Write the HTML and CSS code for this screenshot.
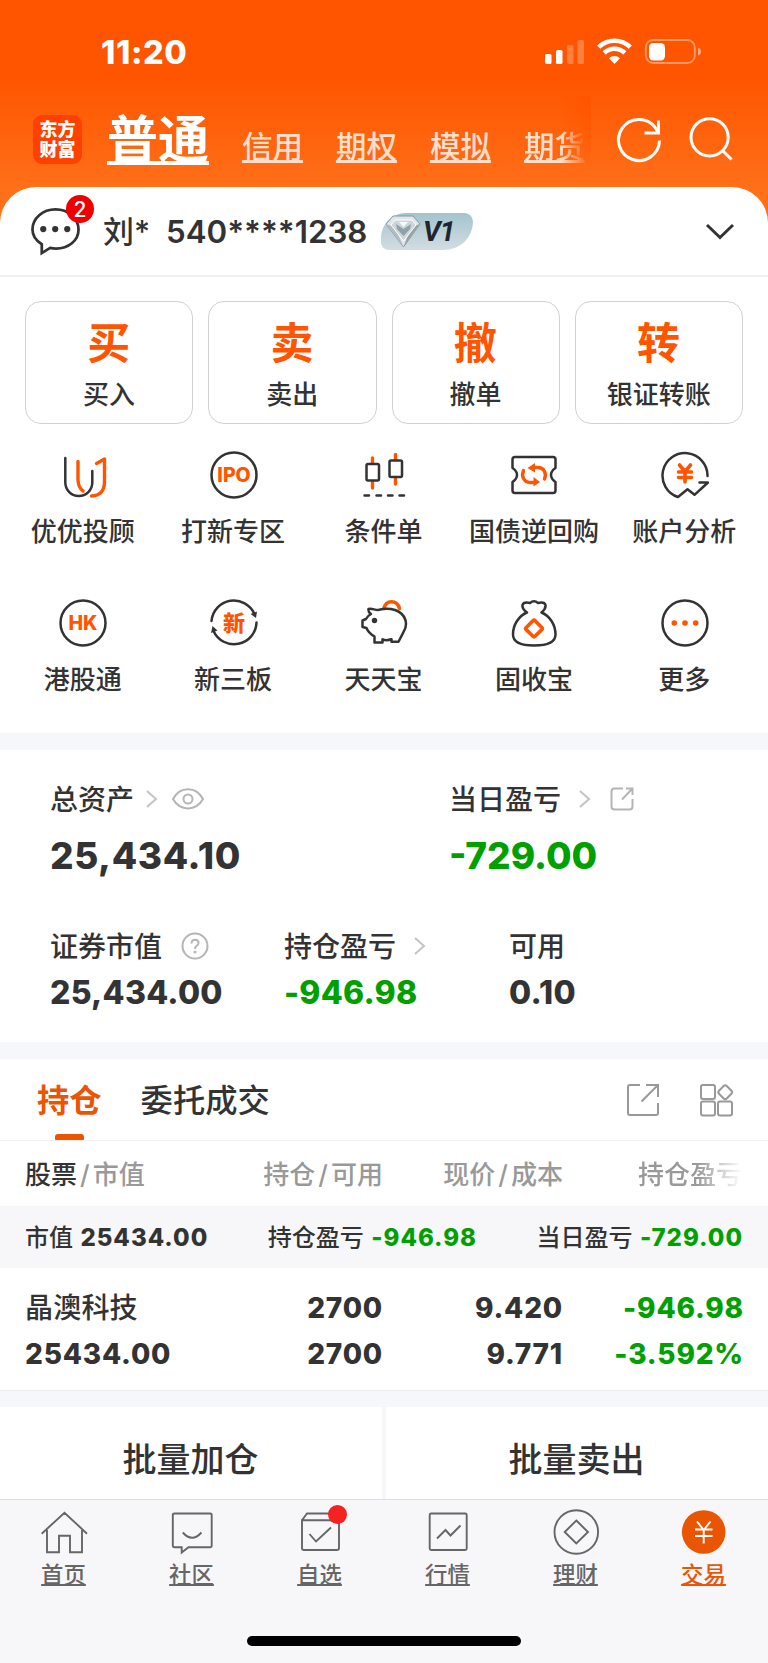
FILE: index.html
```html
<!DOCTYPE html>
<html lang="zh-CN">
<head>
    <meta charset="UTF-8">
    <meta name="viewport" content="width=device-width, initial-scale=1.0">
    <title>东方财富 交易</title>
    <link rel="stylesheet" href="styles.css">
</head>
<body>
    <header class="header">
        <div class="status-bar">
            <span class="time">11:20</span>
            <svg class="status-icons" width="158" height="28" viewBox="0 0 158 28" fill="#fff">
                <rect x="1" y="16" width="6.5" height="10" rx="1.5"/>
                <rect x="12" y="12" width="6.5" height="14" rx="1.5"/>
                <rect x="23" y="7" width="6.5" height="19" rx="1.5" opacity=".25"/>
                <rect x="33.5" y="2" width="6.5" height="24" rx="1.5" opacity=".25"/>
                <g fill="none" stroke="#fff" stroke-width="4.6">
                    <path d="M54.7 9.2a22.5 22.5 0 0 1 31.6 0"/>
                    <path d="M60.2 15a14.7 14.7 0 0 1 20.6 0"/>
                </g>
                <path d="M65 20.3a8 8 0 0 1 11 0l-5.5 5.7z"/>
                <rect x="101.8" y="2" width="49" height="23" rx="7.5" fill="none" stroke="#fff" stroke-width="1.8" opacity=".4"/>
                <rect x="105" y="5" width="16" height="17.5" rx="4.5"/>
                <path d="M154 9.5q3 1 3 4t-3 4z" opacity=".5"/>
            </svg>
        </div>
        <div class="top-nav">
            <div class="logo">东方<br>财富</div>
            <nav class="account-tabs">
                <a class="active">普通</a>
                <a>信用</a>
                <a>期权</a>
                <a>模拟</a>
                <a class="cut">期货</a>
            </nav>
            <svg class="refresh" width="46" height="46" viewBox="0 0 46 46" fill="none" stroke="#fff" stroke-width="3">
                <path d="M43.5 23.5A20.5 20.5 0 1 1 39 10.2L42 15"/>
                <path d="M42.5 3.5V16H28.5"/>
            </svg>
            <svg class="search" width="46" height="46" viewBox="0 0 46 46" fill="none" stroke="#fff" stroke-width="3">
                <circle cx="21.6" cy="20.3" r="18.6"/>
                <path d="M34.5 33.5L43.5 42.5"/>
            </svg>
        </div>
    </header>

    <section class="account">
        <div class="message">
            <svg width="49" height="50" viewBox="0 0 50 50" fill="none" stroke="#333" stroke-width="2.8">
                <path d="M11 38.5C4.5 34.5 1.5 29 1.5 23.5C1.5 12 12 3 25 3S48.5 12 48.5 23.5S38 43 25.5 43Q22.5 43 19.5 42.3L11 47.5z"/>
                <g fill="#333" stroke="none"><circle cx="12.5" cy="23" r="3.2"/><circle cx="24.7" cy="23" r="3.2"/><circle cx="37" cy="23" r="3.2"/></g>
            </svg>
            <span class="badge">2</span>
        </div>
        <span class="user-name">刘*</span>
        <span class="user-id">540****1238</span>
        <div class="level">
            <svg width="36" height="33" viewBox="0 0 36 33">
                <path d="M8 1H28L35 9L18.5 32L1 9z" fill="#dfe6ea" stroke="#8d989e"/>
                <path d="M18.5 32L35 9L26 12z" fill="#98a3a9"/>
                <path d="M1 9L10 12L18.5 32z" fill="#b1bbc1"/>
                <path d="M10 5H27L31 10L18.5 26L6 10z" fill="#cbd5da" stroke="#fff"/>
                <path d="M11 9L18.5 14L26 9L25 14L18.5 21L12 14z" fill="#8fa0a9"/>
                <path d="M14 7H23L18.5 12z" fill="#f7fafb"/>
            </svg>
            <span>V1</span>
        </div>
        <svg class="expand" width="30" height="20" viewBox="0 0 30 20" fill="none" stroke="#333" stroke-width="3"><path d="M2 3L15 15.5L28 3"/></svg>
    </section>

    <section class="actions">
        <div class="action"><b>买</b><span>买入</span></div>
        <div class="action"><b>卖</b><span>卖出</span></div>
        <div class="action"><b>撤</b><span>撤单</span></div>
        <div class="action"><b>转</b><span>银证转账</span></div>
    </section>

    <section class="features">
        <div class="feature">
            <svg viewBox="0 0 48 48">
                <path d="M6.3 7V31.5a13.5 13.5 0 0 0 27 0V20"/>
                <path class="hot" d="M19 10.5V29Q19.5 37 24 40M37.5 12.5L45.5 8V31.5Q45 44.5 32.5 45"/>
            </svg>
            <span>优优投顾</span>
        </div>
        <div class="feature">
            <svg viewBox="0 0 48 48"><circle cx="24" cy="24" r="22.5"/><text x="24" y="31">IPO</text></svg>
            <span>打新专区</span>
        </div>
        <div class="feature">
            <svg viewBox="0 0 48 48">
                <path class="hot" d="M12.5 7v5M12.5 31v6M35.5 3.5v5M35.5 28v5"/>
                <rect x="6.5" y="13" width="12.5" height="16.5" rx="1.5"/>
                <rect x="29.5" y="9.5" width="12.5" height="16.5" rx="1.5"/>
                <path d="M4.5 44.5h4.5M16.5 44.5h4.5M28 44.5h4.5M39.5 44.5h4.5"/>
            </svg>
            <span>条件单</span>
        </div>
        <div class="feature">
            <svg viewBox="0 0 48 48">
                <path d="M5 6H43Q45.5 6 45.5 8.5V17Q41 20 41 24T45.5 31V39.5Q45.5 42 43 42H5Q2.5 42 2.5 39.5V31Q7 28 7 24T2.5 17V8.5Q2.5 6 5 6z"/>
                <path class="hot" d="M13.5 19.5C11 25 14 31.5 20 31.5H24M34.5 28C37 22.5 34 16.5 28 16.5H24"/>
                <path class="hot-fill" d="M17.5 17l7.5-5v9.5zM30 31l-6.5-5v9.5z"/>
            </svg>
            <span>国债逆回购</span>
        </div>
        <div class="feature">
            <svg viewBox="0 0 48 48">
                <path d="M46.5 25A22.5 22.5 0 1 0 17 46L26.5 38.2L33.5 43.8L47 31.5H38.5"/>
                <path class="hot thick" d="M18.5 14l5.5 6.5L29.5 14M24 20.5V31M17.5 21H30.5M17.5 26.5H30.5"/>
            </svg>
            <span>账户分析</span>
        </div>
        <div class="feature">
            <svg viewBox="0 0 48 48"><circle cx="24" cy="24" r="22.5"/><text x="24" y="31">HK</text></svg>
            <span>港股通</span>
        </div>
        <div class="feature">
            <svg viewBox="0 0 48 48">
                <path d="M1.5 22A22.5 22.5 0 0 1 44.5 15M46.5 23.5A22.5 22.5 0 0 1 3.5 32"/>
                <path class="dark-fill" d="M40.5 15l6.5-2.5-1 6.5zM7.5 31.5L1 34l1.5-7z"/>
                <text class="cn" x="24" y="31.5">新</text>
            </svg>
            <span>新三板</span>
        </div>
        <div class="feature">
            <svg viewBox="0 0 48 48">
                <path class="hot thick" d="M24 9.5C26 .5 37 .5 39.5 9.5"/>
                <path d="M8.5 10C12 9 15.5 11.5 19 10.8C25 9.3 31 9.8 35 11C46 15 48.5 25 43.5 33L38.5 42.8H31.5V40.3Q26 42 22.5 40.3V43.5H14.5V37.5Q8.5 34 6.5 29L2.5 28V21.5L6 20Q8 16.5 11 15Q8 13 8.5 10z"/>
                <circle class="dark-fill" cx="14.5" cy="21.5" r="2.7"/>
            </svg>
            <span>天天宝</span>
        </div>
        <div class="feature">
            <svg viewBox="0 0 48 48">
                <path d="M17 13.5Q12 10 12.5 6Q13.5 2.5 20 4Q24 .5 28 4Q34.5 2.5 35.5 6Q36 10 31.5 13.5C40 17 45.5 26 45.5 35.5C45.5 43.5 37 46.5 24 46.5S3 43.5 3 35.5C3 26 8.5 17 17 13.5z"/>
                <rect class="hot thick" x="17.8" y="23.3" width="12.5" height="12.5" rx="1.5" transform="rotate(45 24 29.5)"/>
            </svg>
            <span>固收宝</span>
        </div>
        <div class="feature">
            <svg viewBox="0 0 48 48">
                <circle cx="24" cy="24" r="22.5"/>
                <g class="hot-fill"><circle cx="13.3" cy="24" r="2.8"/><circle cx="24" cy="24" r="2.8"/><circle cx="34.7" cy="24" r="2.8"/></g>
            </svg>
            <span>更多</span>
        </div>
    </section>

    <section class="assets">
        <div class="assets-main">
            <div class="asset">
                <div class="label">总资产
                    <svg class="arrow" width="12" height="18" viewBox="0 0 12 18"><path d="M1 1L10 9L1 17"/></svg>
                    <svg class="eye" width="32" height="24" viewBox="0 0 32 24"><path d="M1 12C8 -1 24 -1 31 12C24 24.5 8 24.5 1 12z"/><circle cx="16" cy="12" r="4.5"/></svg>
                </div>
                <div class="value total">25,434.10</div>
            </div>
            <div class="asset">
                <div class="label">当日盈亏
                    <svg class="arrow wide" width="12" height="18" viewBox="0 0 12 18"><path d="M1 1L10 9L1 17"/></svg>
                    <svg class="share" width="24" height="24" viewBox="0 0 24 24"><path d="M13 1.5H4.5Q1.5 1.5 1.5 4.5V19.5Q1.5 22.5 4.5 22.5H19.5Q22.5 22.5 22.5 19.5V12M16 1.5H22.5V8M22.5 1.5L12 12.5"/></svg>
                </div>
                <div class="value down">-729.00</div>
            </div>
        </div>
        <div class="assets-detail">
            <div class="asset">
                <div class="label">证券市值
                    <svg class="help" width="28" height="28" viewBox="0 0 28 28"><circle cx="14" cy="14" r="12.5"/><path d="M10.5 11.5Q10.5 7.8 14 7.8T17.5 11Q17.5 13 15.5 14Q14 15 14 17"/><circle cx="14" cy="20" r=".6"/></svg>
                </div>
                <div class="value">25,434.00</div>
            </div>
            <div class="asset">
                <div class="label">持仓盈亏
                    <svg class="arrow wide" width="12" height="18" viewBox="0 0 12 18"><path d="M1 1L10 9L1 17"/></svg>
                </div>
                <div class="value down">-946.98</div>
            </div>
            <div class="asset">
                <div class="label">可用</div>
                <div class="value">0.10</div>
            </div>
        </div>
    </section>

    <section class="holdings">
        <div class="tabs">
            <div class="tab active">持仓</div>
            <div class="tab">委托成交</div>
            <svg class="tab-share" width="34" height="34" viewBox="0 0 34 34"><path d="M14 2H4Q2 2 2 4V30Q2 32 4 32H30Q32 32 32 30V20M20 2H32V14M32 2L15.5 18.5"/></svg>
            <svg class="tab-grid" width="36" height="34" viewBox="0 0 36 34">
                <rect x="2" y="2" width="14" height="14" rx="2"/>
                <rect x="2" y="18.5" width="14" height="14" rx="2"/>
                <rect x="19" y="18.5" width="14" height="14" rx="2"/>
                <rect x="20.7" y="3.7" width="11" height="11" rx="2.5" transform="rotate(45 26.2 9.2)"/>
            </svg>
        </div>
        <div class="table-head">
            <span><em>股票</em><i>/</i>市值</span>
            <span>持仓<i>/</i>可用</span>
            <span>现价<i>/</i>成本</span>
            <span class="fade">持仓盈亏</span>
        </div>
        <div class="summary">
            <span>市值 <b>25434.00</b></span>
            <span>持仓盈亏 <b class="down">-946.98</b></span>
            <span>当日盈亏 <b class="down">-729.00</b></span>
        </div>
        <div class="stock">
            <div><span class="stock-name">晶澳科技</span><span>25434.00</span></div>
            <div><span>2700</span><span>2700</span></div>
            <div><span>9.420</span><span>9.771</span></div>
            <div class="down"><span>-946.98</span><span>-3.592%</span></div>
        </div>
    </section>

    <section class="batch">
        <div>批量加仓</div>
        <div>批量卖出</div>
    </section>

    <footer class="footer">
        <nav class="tab-bar">
            <a>
                <svg viewBox="0 0 48 48"><path d="M1.7 25.7L24.5 4.7L47 25.7M7 22V44.3H19V27.7H30V44.3H42V22"/></svg>
                <span>首页</span>
            </a>
            <a>
                <svg viewBox="0 0 48 48"><path d="M6.5 5.5H42Q43.7 5.5 43.7 7V37.5Q43.7 39.3 42 39.3H20.5L13.7 44.5V39.3H6.5Q4.8 39.3 4.8 37.5V7Q4.8 5.5 6.5 5.5zM14.8 24.5Q24 35 33.5 24.5"/></svg>
                <span>社区</span>
            </a>
            <a>
                <svg viewBox="0 0 48 48"><path d="M6 12.3V40Q6 42 8 42H41Q43 42 43 40V12.3zM6 12.3L11 5.5H38L43 12.3M13.5 26L20 33.5L35 19.5"/></svg>
                <span>自选</span>
                <em class="dot"></em>
            </a>
            <a>
                <svg viewBox="0 0 48 48"><rect x="5.7" y="5.5" width="37" height="36.5" rx="1.5"/><path d="M13 30.5L21.5 22L26.5 27.5L36.5 17.5"/></svg>
                <span>行情</span>
            </a>
            <a>
                <svg viewBox="0 0 48 48"><circle cx="24.3" cy="24" r="21.8"/><path d="M24.3 12.5L36 24L24.3 35.5L12.7 24z"/></svg>
                <span>理财</span>
            </a>
            <a class="active">
                <svg viewBox="0 0 48 48"><circle cx="23.7" cy="24" r="21.8"/><path d="M17 13.5L23.7 22L30.5 13.5M23.7 22V35.5M15 21.5H32.5M15 28H32.5"/></svg>
                <span>交易</span>
            </a>
        </nav>
        <div class="home-bar"></div>
    </footer>
</body>
</html>
```
FILE: styles.css
```css
* {
    box-sizing: border-box;
}
body {
    margin: 0;
    width: 768px;
    height: 1663px;
    overflow: hidden;
    font-family: Inter, "Noto Sans CJK SC", sans-serif;
    font-weight: 500;
    color: #333;
    background-color: #fff;
}
svg {
    display: block;
    flex-shrink: 0;
}
em, i {
    font-style: normal;
}
.down {
    color: #00a000;
}

/* 顶部 */
.header {
    height: 230px;
    background: linear-gradient(#ff5500 0, #ff5500 78px, #ff7019 190px, #ff7019 100%);
    color: #fff;
}
.status-bar {
    height: 96px;
    padding: 9px 66px 0 101px;
    display: flex;
    align-items: center;
    justify-content: space-between;
}
.time {
    font-size: 32.5px;
    line-height: 32px;
    font-weight: 800;
    letter-spacing: .6px;
}
.status-icons {
    margin-bottom: 1px;
}
.top-nav {
    height: 91px;
    padding: 0 34px 0 33px;
    display: flex;
    align-items: flex-start;
}
.logo {
    width: 49px;
    height: 49px;
    margin-top: 19px;
    padding-top: 5px;
    border-radius: 9px;
    background-color: #ff4100;
    font-size: 18px;
    line-height: 20px;
    font-weight: 900;
    text-align: center;
}
.account-tabs {
    position: relative;
    width: 485px;
    height: 91px;
    margin-left: 25px;
    display: flex;
    align-items: baseline;
    gap: 33px;
    overflow: hidden;
    white-space: nowrap;
}
/* 右侧渐隐遮罩 */
.account-tabs::after {
    content: "";
    position: absolute;
    top: 0;
    right: 0;
    width: 30px;
    height: 70px;
    background: linear-gradient(90deg, transparent, #ff5500);
    -webkit-mask-image: linear-gradient(#000, transparent);
    mask-image: linear-gradient(#000, transparent);
}
.account-tabs a {
    font-size: 30.5px;
    line-height: 88px;
    color: #ffdfcc;
    text-decoration: underline 3px;
    text-underline-offset: 2px;
    text-decoration-skip-ink: none;
}
.account-tabs .active {
    color: #fff;
    font-size: 51px;
    font-weight: 700;
    text-decoration-thickness: 4px;
    text-underline-offset: 3px;
}
.account-tabs .cut {
    -webkit-mask-image: linear-gradient(90deg, #000 60%, transparent 105%);
    mask-image: linear-gradient(90deg, #000 60%, transparent 105%);
}
.refresh {
    margin: 21px 0 0 25px;
}
.search {
    margin: 21px 0 0 26px;
}

/* 账户 */
.account {
    height: 90px;
    margin-top: -43px;
    padding: 1px 33px 0 31px;
    display: flex;
    align-items: center;
    background-color: #fff;
    border-bottom: 2px solid #f0f0f0;
    border-radius: 36px 36px 0 0;
    font-size: 31px;
}
.message {
    position: relative;
    margin-bottom: 2px;
}
.badge {
    position: absolute;
    top: -11px;
    left: 35px;
    width: 28px;
    height: 28px;
    border-radius: 50%;
    background-color: #ee0000;
    color: #fff;
    font-size: 21px;
    line-height: 29px;
    text-align: center;
}
.user-name {
    width: 63px;
    margin: 0 0 4px 23px;
}
.user-id {
    width: 215px;
    font-size: 31.3px;
    font-weight: 600;
}
.level {
    height: 37px;
    width: 92px;
    padding-left: 4px;
    display: flex;
    align-items: center;
    background: linear-gradient(#a2c4ce, #d3dde2);
    border-radius: 26px 9px 30px 8px;
    color: #20242f;
    font-size: 28px;
    font-weight: 700;
    font-style: italic;
    font-family: Roboto, sans-serif;
}
.level span {
    margin-left: 2px;
    letter-spacing: -1px;
}
.expand {
    margin-left: auto;
}

/* 买卖按钮 */
.actions {
    padding: 24px 25px 0;
    display: grid;
    grid-template-columns: repeat(4, 1fr);
    gap: 15px;
}
.action {
    height: 123px;
    padding-top: 16px;
    border: 1px solid #d2d2d2;
    border-radius: 16px;
    display: flex;
    flex-direction: column;
    align-items: center;
}
.action b {
    margin-right: 1px;
    color: #ff5500;
    font-size: 43px;
    line-height: 50px;
    font-weight: 700;
}
.action span {
    margin-top: 11px;
    font-size: 26px;
    line-height: 32px;
}

/* 功能入口 */
.features {
    height: 309px;
    padding: 27px 8px 0;
    display: grid;
    grid-template-columns: repeat(5, 1fr);
    grid-auto-rows: 147.5px;
}
.feature {
    display: flex;
    flex-direction: column;
    align-items: center;
    font-size: 26px;
    line-height: 32px;
    white-space: nowrap;
}
.feature span {
    margin-right: 1px;
}
.feature svg {
    width: 48px;
    height: 48px;
    margin-bottom: 17px;
    fill: none;
    stroke: #333;
    stroke-width: 2.5;
    stroke-linecap: round;
    stroke-linejoin: round;
}
.feature .hot {
    stroke: #ff5500;
    stroke-width: 3.4;
}
.feature .thick {
    stroke-width: 3.6;
}
.feature .hot-fill {
    fill: #ff5500;
    stroke: none;
}
.feature .dark-fill {
    fill: #333;
    stroke: none;
}
.feature text {
    fill: #ff5500;
    stroke: none;
    font-family: Inter, "Noto Sans CJK SC", sans-serif;
    font-size: 19.5px;
    font-weight: 800;
    text-anchor: middle;
}
.feature .cn {
    font-size: 22px;
}

/* 资产 */
.assets {
    height: 309px;
    border-top: 17px solid #f6f7fa;
    padding: 30px 0 0 50px;
}
.assets-main {
    display: grid;
    grid-template-columns: 399px 1fr;
}
.assets-detail {
    margin-top: 49px;
    display: grid;
    grid-template-columns: 234px 225px 1fr;
}
.label {
    height: 36px;
    display: flex;
    align-items: center;
    font-size: 28px;
    white-space: nowrap;
}
.label svg {
    margin-top: 2px;
    fill: none;
    stroke: #b5b5b5;
    stroke-width: 2;
}
.label .arrow {
    margin-left: 12px;
    stroke: #c4c4c4;
}
.label .wide {
    margin-left: 18px;
}
.label .eye {
    margin-left: 14px;
}
.label .share {
    margin-left: 19px;
}
.label .help {
    margin-left: 19px;
}
.value {
    font-weight: 800;
}
.assets-main .value {
    margin-top: 18px;
    font-size: 37px;
    line-height: 44px;
}
.assets-main .total {
    letter-spacing: .6px;
}
.assets-detail .value {
    margin-top: 10px;
    font-size: 32px;
    line-height: 40px;
    letter-spacing: .25px;
}

/* 持仓 */
.holdings {
    border-top: 17px solid #f6f7fa;
}
.tabs {
    height: 82px;
    padding: 0 33px 0 37px;
    display: flex;
    align-items: center;
    border-bottom: 1px solid #f0f0f2;
}
.tab {
    position: relative;
    height: 81px;
    line-height: 83px;
    font-size: 32.3px;
    margin-right: 39px;
}
.tab.active {
    color: #ea5504;
    font-weight: 700;
}
.tab.active::after {
    content: "";
    position: absolute;
    left: 18px;
    bottom: 0;
    width: 29px;
    height: 6px;
    border-radius: 3px 3px 1px 1px;
    background-color: #ea5504;
}
.tabs svg {
    fill: none;
    stroke: #999;
    stroke-width: 2;
}
.tab-share {
    margin-left: auto;
}
.tab-grid {
    margin-left: 39px;
}
.table-head {
    height: 65px;
    padding: 0 26px 2px 25px;
    display: grid;
    grid-template-columns: 178px 180px 180px 1fr;
    align-items: center;
    font-size: 26px;
    color: #999;
}
.table-head i {
    margin: 0 3px;
}
.table-head em {
    color: #333;
}
.table-head span + span {
    text-align: right;
}
.table-head .fade {
    -webkit-mask-image: linear-gradient(90deg, #000 75%, transparent 100%);
    mask-image: linear-gradient(90deg, #000 75%, transparent 100%);
}
.summary {
    height: 62px;
    padding: 0 25px 3px;
    display: flex;
    align-items: center;
    justify-content: space-between;
    background-color: #f7f7fa;
    font-size: 24px;
}
.summary b {
    margin-left: 1px;
    font-weight: 800;
    letter-spacing: 1px;
}
.stock {
    height: 123px;
    padding: 17px 24px 0 25px;
    display: grid;
    grid-template-columns: 178px 180px 180px 1fr;
    border-bottom: 1px solid #eee;
    font-size: 28px;
    line-height: 46px;
    font-weight: 800;
    letter-spacing: .8px;
}
.stock span {
    display: block;
}
.stock .stock-name {
    font-weight: 500;
    letter-spacing: .2px;
}
.stock div + div {
    text-align: right;
}

/* 批量操作 */
.batch {
    height: 108px;
    border-top: 16px solid #f6f7fa;
    background-color: #f6f7fa;
    display: grid;
    grid-template-columns: 1fr 1fr;
    gap: 4px;
}
.batch div {
    padding: 27px 1px 0 0;
    background-color: #fff;
    font-size: 34px;
    line-height: 52px;
    text-align: center;
}

/* 底部导航 */
.footer {
    height: 165px;
    border-top: 1px solid #dcdde0;
    background-color: #f7f7fa;
}
.tab-bar {
    height: 136px;
    padding-top: 8px;
    display: grid;
    grid-template-columns: repeat(6, 1fr);
}
.tab-bar a {
    position: relative;
    display: flex;
    flex-direction: column;
    align-items: center;
    color: #666;
    font-size: 22.4px;
    line-height: 28px;
    text-decoration: underline 1.5px;
    text-underline-offset: 1px;
    text-decoration-skip-ink: none;
}
.tab-bar span {
    margin-right: 1px;
}
.tab-bar svg {
    width: 48px;
    height: 48px;
    margin-bottom: 5px;
    fill: none;
    stroke: #666;
    stroke-width: 1.9;
}
.tab-bar .active {
    color: #ea5504;
}
.tab-bar .active svg {
    stroke: #fff;
}
.tab-bar .active circle {
    fill: #ea5504;
    stroke: none;
}
.dot {
    position: absolute;
    top: -3px;
    left: 72px;
    width: 19px;
    height: 19px;
    border-radius: 50%;
    background-color: #f52222;
}
.home-bar {
    width: 274px;
    height: 10px;
    margin: 0 auto;
    border-radius: 5px;
    background-color: #000;
}
```
